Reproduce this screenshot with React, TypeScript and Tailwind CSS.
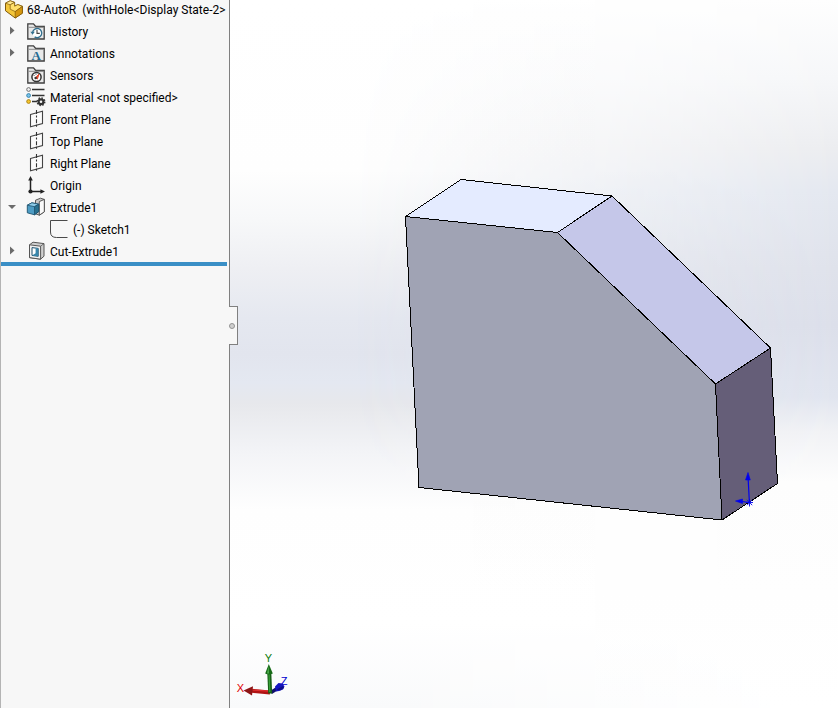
import { useState } from "react";
import type { ReactNode } from "react";

function Folder({ children }: { children?: ReactNode }) {
    return <svg viewBox="0 0 20 20" className="w-5 h-5 shrink-0" aria-hidden="true">
        <path d="M1.8 18V2.8h5.7l2.2 2.7h8.5V18z" fill="#e9e9e9" stroke="#3f3f3f" strokeWidth="1.3" />
        <path d="M2.5 6.3h15" stroke="#8a8a8a" strokeWidth="1" />
        {children}
    </svg>
}

function HistoryIcon() {
    return <Folder>
        <circle cx="11" cy="12" r="4.6" fill="#fff" />
        <path d="M6.6 11.5a4.6 4.6 0 1 1 2 4.4" fill="none" stroke="#33708f" strokeWidth="1.4" />
        <path d="M4.4 10.8h4.4l-2.2 3z" fill="#33708f" />
        <path d="M11 9v3.4h2.8" fill="none" stroke="#444" strokeWidth="1.1" />
    </Folder>
}

function AnnotationsIcon() {
    return <Folder>
        <text x="10.2" y="16.8" textAnchor="middle" fontSize="13" fontWeight="bold" fill="#256b92" fontFamily="Liberation Serif, serif">A</text>
    </Folder>
}

function SensorsIcon() {
    return <Folder>
        <circle cx="10.5" cy="12" r="4.6" fill="#fff" stroke="#333" strokeWidth="1.5" />
        <path d="M9.4 12.8l3.6-3.8-1.6 5z" fill="#e2492f" stroke="#e2492f" />
        <circle cx="9.6" cy="13" r="1.2" fill="#333" />
        <path d="M7.6 10.5h1M10 8.8v1" stroke="#333" strokeWidth="0.8" />
    </Folder>
}

function MaterialIcon() {
    return <svg viewBox="0 0 20 20" className="w-5 h-5 shrink-0" aria-hidden="true">
        <path d="M6 2.5h12.5M6 8.5h12.5M6 14.5h5" stroke="#333" strokeWidth="1.5" />
        <circle cx="2.6" cy="2.5" r="1.9" fill="#eee" stroke="#666" strokeWidth="0.9" />
        <circle cx="2.6" cy="8.5" r="1.9" fill="#79c3e8" stroke="#2d7fab" strokeWidth="0.9" />
        <circle cx="2.6" cy="14.5" r="1.9" fill="#f5c52c" stroke="#a87f12" strokeWidth="0.9" />
        <circle cx="15" cy="14.7" r="2.4" fill="none" stroke="#333" strokeWidth="2.2" />
        <circle cx="15" cy="14.7" r="3.8" fill="none" stroke="#333" strokeWidth="1.4" strokeDasharray="1.5 1.48" />
    </svg>
}

function PlaneIcon() {
    return <svg viewBox="0 0 20 20" className="w-5 h-5 shrink-0" aria-hidden="true">
        <path d="M4.5 5.5l12-3.2v12.2l-12 3.2z" fill="#fbfbfb" stroke="#444" strokeWidth="1.1" />
        <path d="M10.5 1v18" stroke="#333" strokeWidth="1.1" strokeDasharray="4 1.6 2 1.6" />
    </svg>
}

function OriginIcon() {
    return <svg viewBox="0 0 20 20" className="w-5 h-5 shrink-0" aria-hidden="true">
        <path d="M4.5 5v11.5H16" fill="none" stroke="#222" strokeWidth="1.5" />
        <path d="M4.5 1l2.3 4.6H2.2zM19 16.5l-4.6-2.3v4.6z" fill="#222" />
        <circle cx="4.5" cy="16.5" r="2.1" fill="#222" />
    </svg>
}

function ExtrudeIcon() {
    return <svg viewBox="0 0 20 20" className="w-5 h-5 shrink-0" aria-hidden="true">
        <path d="M9.5 3.2l5-2 3.8 1.2v12.4l-5 3.4-3.8-1.4z" fill="#c9c9c9" stroke="#4a4a4a" strokeWidth="0.9" />
        <path d="M13.3 4.6l5-2.2v12.4l-5 3.4z" fill="#fafafa" stroke="#4a4a4a" strokeWidth="0.9" />
        <path d="M1.3 8.2l4.6-2.4 6.8 1.4v7.4l-4.2 3.2-7.2-2z" fill="#4d9cc4" stroke="#1d516d" strokeWidth="0.9" />
        <path d="M1.3 8.2l4.6-2.4 6.8 1.4-4.2 2.5z" fill="#8ccbe8" stroke="#1d516d" strokeWidth="0.8" />
        <path d="M8.5 9.7v8.1l4.2-3.2V7.2z" fill="#27708f" stroke="#1d516d" strokeWidth="0.8" />
    </svg>
}

function SketchIcon() {
    return <svg viewBox="0 0 20 20" className="w-5 h-5 shrink-0" aria-hidden="true">
        <path d="M18.5 1.5h-17v11.5q0 5.5 6 5.5h11" fill="none" stroke="#4a4a4a" strokeWidth="1" />
    </svg>
}

function CutIcon() {
    return <svg viewBox="0 0 20 20" className="w-5 h-5 shrink-0" aria-hidden="true">
        <path d="M3.5 3.8L7 1.2l11 1.4v12.6l-3.4 3-11.1-1.6z" fill="#d0d0d0" stroke="#555" strokeWidth="1" />
        <path d="M3.5 3.8l11.1 1.4v13L3.5 16.6z" fill="#f2f2f2" stroke="#555" strokeWidth="1" />
        <path d="M14.6 5.2L18 2.6" stroke="#555" strokeWidth="0.8" />
        <path d="M6 6.6l6.2.8v7.9L6 14.4z" fill="#fff" stroke="#1d516d" strokeWidth="1" />
        <path d="M9.6 7.2l2.6.3v7.7L6 14.4l3.6-2.2z" fill="#3786ab" />
    </svg>
}

function PartIcon() {
    return <svg viewBox="0 0 20 20" className="w-5 h-5 shrink-0" aria-hidden="true">
        <path d="M1.5 3.2L6.2.8l4.4 1.6v3.8l3.2-1.6 4.6 1.8v6.8L11.2 18 1.5 10.8z" fill="#f3c63b" stroke="#80590b" strokeWidth="1" />
        <path d="M1.5 3.2L6.2.8l4.4 1.6-4.4 2.4z" fill="#ffe88f" stroke="#80590b" strokeWidth="0.7" />
        <path d="M6.2 4.8v4.4l5 2.4 7.2-5.2-4.6-1.8-3.2 1.6V2.4z" fill="#ffdf6b" stroke="#80590b" strokeWidth="0.7" />
        <path d="M11.2 11.6V18l7.2-4.8V6.4z" fill="#d6970f" stroke="#80590b" strokeWidth="0.7" />
    </svg>
}

type Item = {
    label: string;
    icon: ReactNode;
    arrow?: "right" | "down";
    nested?: boolean;
}

const items: Item[] = [
    { label: "History", icon: <HistoryIcon />, arrow: "right" },
    { label: "Annotations", icon: <AnnotationsIcon />, arrow: "right" },
    { label: "Sensors", icon: <SensorsIcon /> },
    { label: "Material <not specified>", icon: <MaterialIcon /> },
    { label: "Front Plane", icon: <PlaneIcon /> },
    { label: "Top Plane", icon: <PlaneIcon /> },
    { label: "Right Plane", icon: <PlaneIcon /> },
    { label: "Origin", icon: <OriginIcon /> },
    { label: "Extrude1", icon: <ExtrudeIcon />, arrow: "down" },
    { label: "(-) Sketch1", icon: <SketchIcon />, nested: true },
    { label: "Cut-Extrude1", icon: <CutIcon />, arrow: "right" },
]

function TreeRow({ item, open, onToggle }: { item: Item; open: boolean; onToggle: () => void }) {
    return <li className={item.nested ? "flex items-center h-[22px] pl-12" : "flex items-center h-[22px]"}>
        {!item.nested && <span className="w-[25px] flex shrink-0 pl-1.5">
            {item.arrow && <button type="button" aria-label={"Toggle " + item.label} onClick={onToggle} className="w-3 h-3">
                <svg viewBox="0 0 12 12" className="w-3 h-3">
                    {item.arrow === "down" && open
                        ? <path d="M1 4h8L5 8z" fill="#6b6b6b" />
                        : <path d="M3 1.5l4.5 4L3 9.5z" fill="#6b6b6b" />}
                </svg>
            </button>}
        </span>}
        {item.icon}
        <span className="pl-1 pt-0.5 whitespace-pre">{item.label}</span>
    </li>
}

function Tree() {
    const [open, setOpen] = useState(true)
    const shown = items.filter((item) => open || !item.nested)

    return <aside className="relative z-10 w-[230px] shrink-0 bg-[#f7f7f7] border-l border-l-[#b4b4b4] border-r border-r-[#808080]">
        <div className="flex items-center h-5 pl-[3px] whitespace-pre">
            <PartIcon />
            <h1 className="pl-[3px]">68-AutoR  (withHole&lt;Display State-2&gt;</h1>
        </div>
        <ul>
            {shown.map((item) => <TreeRow key={item.label} item={item} open={open} onToggle={() => item.arrow === "down" && setOpen(!open)} />)}
        </ul>
        <div className="h-1 mr-0.5 bg-[#3a8fc6]"></div>
        <button type="button" aria-label="Collapse panel" className="absolute left-full top-[306px] w-[9px] h-[39px] flex items-center justify-center bg-[#f7f7f7] border border-l-0 border-[#808080]">
            <span className="w-1.5 h-1.5 mr-0.5 rounded-full bg-[#cfcfcf] border border-[#949494]"></span>
        </button>
    </aside>
}

function Model() {
    return <svg viewBox="230 0 608 708" preserveAspectRatio="xMinYMin meet" className="relative block w-full h-full">
        <g stroke="#000" strokeWidth="1" strokeLinejoin="round" shapeRendering="crispEdges">
            <path d="M405.5 216.5L461 179.5 612 196 557.5 232.5z" fill="#e4ebff" />
            <path d="M557.5 232.5L612 196 770.5 348 715.5 384z" fill="#c5c7e9" />
            <path d="M715.5 384L770.5 348 777.5 483.5 722 520z" fill="#655e78" />
            <path d="M405.5 216.5L557.5 232.5 715.5 384 722 520 419 487.5z" fill="#a0a3b4" />
        </g>

        {/* sketch origin */}
        <g stroke="#0000f0" fill="#0000f0" strokeWidth="1.2">
            <path d="M748.2 480l1.2 22.5M742 501.5l7.4 1" />
            <path d="M748 472.5l2.3 7.5h-4.8zM735.5 501l7-2v4.6z" strokeWidth="0.6" />
            <path d="M746 502.5h7M747 499.8l5.2 5.4M752.2 499.8l-5.2 5.4M749.5 499v7.5" strokeWidth="0.9" />
        </g>

        {/* axis triad */}
        <g fontFamily="Liberation Sans, sans-serif" fontSize="11" textAnchor="middle">
            <text x="240.5" y="692" fill="#e00000">X</text>
            <text x="268.5" y="662" fill="#0a7a0a">Y</text>
            <text x="284" y="685" fill="#0000d0">Z</text>
        </g>
        <path d="M271 692.5l7-4.5" stroke="#10106a" strokeWidth="3.5" />
        <path d="M275 686.5l3.5-3.5 4 .5 2 3-1.5 3-4 1.5-3 .5z" fill="#1414c0" />
        <path d="M276.5 689.5l6.5-3.5 1 2-4 2.5z" fill="#0c0c86" />
        <path d="M252 690.8l18 1.6" stroke="#b01414" strokeWidth="4" />
        <path d="M252 690l17 1.2" stroke="#e03030" strokeWidth="1.2" />
        <path d="M243.5 690.5l9.5-4.2-1 9.2z" fill="#8e1515" />
        <path d="M269.3 673l.9 20.5" stroke="#176017" strokeWidth="4" />
        <path d="M269 673l.8 19" stroke="#37a037" strokeWidth="1.2" />
        <path d="M268.8 664l4 9.5q-3.8 2-7.6 0z" fill="#176b17" />
        <path d="M268.6 666l.4 7.5h-2z" fill="#4fb04f" />
    </svg>
}

export default function App() {
    return <div className="flex min-h-screen bg-white text-xs text-black font-['Roboto','Noto_Sans',sans-serif]">
        <Tree />
        <main className="relative flex-1 min-w-0 overflow-hidden bg-[linear-gradient(#fff_0%,#fefefe_24%,#f7f8f9_31%,#eeeff3_38%,#e5e8f0_45%,#e2e5ee_50%,#e4e8f1_54%,#e7e8ec_57%,#f3f4f7_64%,#fefefe_72%,#fff_88%,#f9fafb_100%)]">
            <div className="absolute inset-0 bg-[linear-gradient(#fefefe_0%,#f6f7f9_11%,#ecedf0_21%,#e4e8f0_27%,#dfe2eb_38%,#dcdfea_46%,#e1e5ef_56%,#f1f2f5_61%,#fdfdfd_68%,#fff_100%)] [mask-image:linear-gradient(to_right,transparent_20%,black_100%)]"></div>
            <Model />
        </main>
    </div>
}
